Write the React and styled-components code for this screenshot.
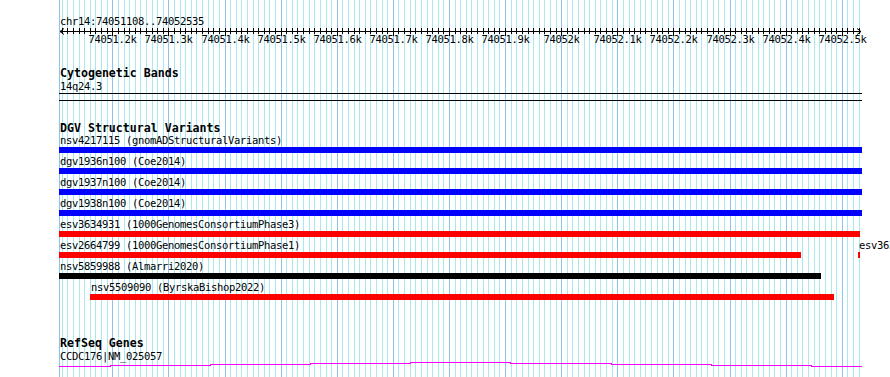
import React from 'react';
import styled, { createGlobalStyle } from 'styled-components';

const START = 74051108;
const X0 = 60.7;
const SCALE = 0.5611;
const LEFT = 59;
const RIGHT = 862;

const toX = (bp) => X0 + (bp - START) * SCALE;
const clampX = (x) => Math.min(RIGHT, Math.max(LEFT, x));

const GlobalStyle = createGlobalStyle`
  html, body {
    margin: 0;
    padding: 0;
    background: #fff;
  }
  body {
    font-family: "DejaVu Sans Mono", "Liberation Mono", monospace;
    color: #000;
  }
`;

const Page = styled.div`
  position: relative;
  width: 890px;
  height: 377px;
  overflow: hidden;
  background: #fff;
`;

const GridLayer = styled.svg`
  position: absolute;
  top: 0;
  left: 0;
  z-index: 0;
`;

const Panel = styled.div`
  position: relative;
  z-index: 1;
  padding: 16px 0 0 ${LEFT}px;
`;

const Label = styled.div`
  font-family: "DejaVu Sans Mono", monospace;
  font-size: 10.5px;
  letter-spacing: -0.32px;
  line-height: 10px;
  height: 10px;
  padding-left: 1px;
  white-space: nowrap;
`;

const Coords = styled(Label)``;

const RulerSvg = styled.svg`
  display: block;
  overflow: visible;
`;

const Track = styled.section`
  margin-top: ${({ $gap }) => $gap}px;
`;

const TrackTitle = styled.div`
  font-family: "DejaVu Sans Mono", monospace;
  font-size: 11.6px;
  font-weight: 700;
  line-height: 12px;
  height: 12px;
  padding-left: 1px;
  white-space: nowrap;
`;

const BandLabel = styled(Label)`
  margin-top: 2px;
`;

const Ideogram = styled.div`
  margin-top: 2px;
  width: ${RIGHT - LEFT}px;
  height: 6px;
  border-top: 1px solid #000;
  border-bottom: 1px solid #000;
`;

const FeatureList = styled.div`
  margin-top: 1px;
`;

const Row = styled.div`
  display: flex;
  height: 21px;
`;

const Feature = styled.div`
  flex: none;
  display: flex;
  flex-direction: column;
  overflow: visible;
`;

const Bar = styled.div`
  margin-top: 2px;
  height: 6px;
  background: ${({ $color }) => $color};
`;

const GeneSvg = styled.svg`
  display: block;
`;

const dgvRows = [
  [{ name: 'nsv4217115 (gnomADStructuralVariants)', start: 74050100, end: 74053900, color: '#0000ff' }],
  [{ name: 'dgv1936n100 (Coe2014)', start: 74049500, end: 74054100, color: '#0000ff' }],
  [{ name: 'dgv1937n100 (Coe2014)', start: 74049500, end: 74054100, color: '#0000ff' }],
  [{ name: 'dgv1938n100 (Coe2014)', start: 74049500, end: 74054100, color: '#0000ff' }],
  [{ name: 'esv3634931 (1000GenomesConsortiumPhase3)', start: 74050800, end: 74052533, color: '#ff0000' }],
  [
    { name: 'esv2664799 (1000GenomesConsortiumPhase1)', start: 74050700, end: 74052427, color: '#ff0000' },
    { name: 'esv3636287 (1000GenomesConsortiumPhase3)', start: 74052529, end: 74052533, color: '#ff0000' },
  ],
  [{ name: 'nsv5859988 (Almarri2020)', start: 74050600, end: 74052463, color: '#000000' }],
  [{ name: 'nsv5509090 (ByrskaBishop2022)', start: 74051160, end: 74052486, color: '#ff0000' }],
];

// gene model outline, steps in page pixels [x0, x1, y]
const geneSteps = [
  [59, 110, 366],
  [110, 210, 365],
  [210, 310, 364],
  [310, 410, 363],
  [410, 510, 362],
  [510, 611, 363],
  [611, 711, 364],
  [711, 811, 365],
  [811, 862, 366],
];

const tickPositions = () => {
  const out = [];
  for (let bp = 74051110; bp <= 74052530; bp += 10) {
    out.push({ bp, x: Math.round(toX(bp)) + 0.5, major: bp % 100 === 0 });
  }
  return out;
};

const majorLabel = (bp) =>
  bp % 1000 === 0 ? `${bp / 1000}k` : `${(bp / 1000).toFixed(1)}k`;

const Grid = () => {
  const ticks = tickPositions();
  return (
    <GridLayer width="890" height="377" shapeRendering="crispEdges">
      <line x1={LEFT + 0.5} x2={LEFT + 0.5} y1="0" y2="377" stroke="#8cc4ec" />
      {ticks.map((t) => (
        <line
          key={t.bp}
          x1={t.x}
          x2={t.x}
          y1="0"
          y2="377"
          stroke={t.major ? '#8cc4ec' : '#a8e8ee'}
        />
      ))}
    </GridLayer>
  );
};

const Ruler = () => {
  const ticks = tickPositions();
  const w = RIGHT - LEFT;
  return (
    <RulerSvg width={w} height="20" shapeRendering="crispEdges">
      <line x1="1" x2={w - 1} y1="5.5" y2="5.5" stroke="#000" />
      <path
        d={`M1 5.5 L5 2.5 M1 5.5 L5 8.5 M${w - 1} 5.5 L${w - 5} 2.5 M${w - 1} 5.5 L${w - 5} 8.5`}
        stroke="#000"
        fill="none"
        shapeRendering="auto"
      />
      {ticks.map((t) => (
        <line
          key={t.bp}
          x1={t.x - LEFT}
          x2={t.x - LEFT}
          y1="2"
          y2={t.major ? 10 : 8}
          stroke="#000"
        />
      ))}
      {ticks
        .filter((t) => t.major)
        .map((t) => (
          <text
            key={`l${t.bp}`}
            x={t.x - LEFT}
            y="17"
            textAnchor="middle"
            fontFamily='"DejaVu Sans Mono", monospace'
            fontSize="10.5"
            letterSpacing="-0.32"
            fill="#000"
          >
            {majorLabel(t.bp)}
          </text>
        ))}
    </RulerSvg>
  );
};

const FeatureRow = ({ features }) => {
  let cursor = LEFT;
  return (
    <Row>
      {features.map((f) => {
        const x1 = clampX(Math.round(toX(f.start)));
        const x2 = Math.max(clampX(Math.round(toX(f.end))), x1 + 2);
        const gap = x1 - cursor;
        cursor = x2;
        return (
          <Feature key={f.name} style={{ marginLeft: gap, width: x2 - x1 }}>
            <Label>{f.name}</Label>
            <Bar $color={f.color} />
          </Feature>
        );
      })}
    </Row>
  );
};

const GeneModel = () => {
  const top = 361;
  const d = geneSteps
    .map(([a, b, y], i) => `${i === 0 ? 'M' : 'L'}${a - LEFT} ${y - top + 0.5} L${b - LEFT} ${y - top + 0.5}`)
    .join(' ');
  return (
    <GeneSvg width={RIGHT - LEFT} height="8" shapeRendering="crispEdges">
      <path d={d} stroke="#ff00ff" strokeWidth="1" fill="none" />
    </GeneSvg>
  );
};

export default function App() {
  return (
    <Page>
      <GlobalStyle />
      <Grid />
      <Panel>
        <Coords>chr14:74051108..74052535</Coords>
        <Ruler />

        <Track $gap={21}>
          <TrackTitle>Cytogenetic Bands</TrackTitle>
          <BandLabel>14q24.3</BandLabel>
          <Ideogram />
        </Track>

        <Track $gap={21}>
          <TrackTitle>DGV Structural Variants</TrackTitle>
          <FeatureList>
            {dgvRows.map((features, i) => (
              <FeatureRow key={i} features={features} />
            ))}
          </FeatureList>
        </Track>

        <Track $gap={34}>
          <TrackTitle>RefSeq Genes</TrackTitle>
          <BandLabel>CCDC176|NM_025057</BandLabel>
          <GeneModel />
        </Track>
      </Panel>
    </Page>
  );
}
